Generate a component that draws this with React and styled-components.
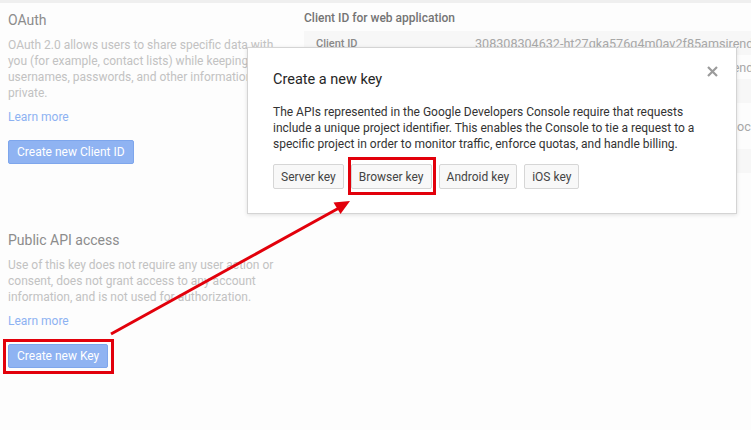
import React from "react";
import styled, { createGlobalStyle } from "styled-components";

const Global = createGlobalStyle`
  html, body {
    margin: 0;
    padding: 0;
    background: #fdfdfd;
  }
  body {
    font-family: Roboto, "Liberation Sans", Arial, sans-serif;
    font-size: 12px;
  }
`;

const Page = styled.div`
  position: relative;
  width: 751px;
  height: 430px;
  overflow: hidden;
  background: #fdfdfd;
`;

const TopStrip = styled.div`
  height: 3px;
  background: #efefef;
`;

const Columns = styled.div`
  display: grid;
  grid-template-columns: 280px 1fr;
  column-gap: 16px;
  padding-left: 8px;
`;

const Left = styled.div`
  display: flex;
  flex-direction: column;
`;

const Section = styled.section`
  display: flex;
  flex-direction: column;
  align-items: flex-start;
  margin-top: ${(p) => p.$top || 0}px;
`;

const Heading = styled.h2`
  margin: 0;
  font-size: 14px;
  line-height: 20px;
  font-weight: 400;
  color: #8c8c8c;
`;

const Desc = styled.p`
  margin: 7px 0 0;
  font-size: 12px;
  line-height: 16px;
  color: #c2c2c2;
`;

const LearnMore = styled.a`
  margin-top: 8px;
  font-size: 12px;
  line-height: 16px;
  color: #8db2f2;
  text-decoration: none;
`;

const BlueButton = styled.button`
  margin-top: 15px;
  height: 24px;
  padding: 0 8px;
  border: 1px solid #7ea6ec;
  border-radius: 2px;
  background: #8fb3f2;
  color: #fff;
  font-family: inherit;
  font-size: 12px;
`;

const Right = styled.div`
  display: flex;
  flex-direction: column;
  min-width: 0;
`;

const SubTitle = styled.div`
  margin-top: 7px;
  font-size: 12px;
  line-height: 16px;
  font-weight: 500;
  color: #747474;
`;

const Table = styled.div`
  margin-top: 5px;
  display: flex;
  flex-direction: column;
`;

const Row = styled.div`
  display: grid;
  grid-template-columns: 159px 1fr;
  height: ${(p) => p.$h || 24}px;
  align-items: center;
  padding-left: 12px;
  background: ${(p) => (p.$alt ? "#f7f7f7" : "transparent")};
  white-space: nowrap;
`;

const Label = styled.span`
  font-size: 11px;
  font-weight: 500;
  color: #8a8a8a;
`;

const Value = styled.span`
  font-size: 12.6px;
  color: #a8a8a8;
  white-space: nowrap;
`;

const NoKeys = styled.div`
  margin-top: 22px;
  font-size: 12px;
  line-height: 16px;
  color: #9a9a9a;
`;

const Modal = styled.div`
  position: absolute;
  left: 247px;
  top: 47px;
  width: 490px;
  box-sizing: border-box;
  padding: 22px 25px 24px;
  background: #fff;
  border: 1px solid #d4d4d4;
  box-shadow: 0 1px 4px rgba(0, 0, 0, 0.12);
`;

const ModalTitle = styled.h3`
  margin: 0;
  font-size: 14.5px;
  line-height: 20px;
  font-weight: 400;
  color: #262626;
`;

const Close = styled.button`
  position: absolute;
  top: 16px;
  right: 17px;
  width: 14px;
  height: 14px;
  padding: 0;
  border: 0;
  background: none;
  display: flex;
  align-items: center;
  justify-content: center;
`;

const ModalText = styled.p`
  margin: 14px 0 0;
  font-size: 12px;
  line-height: 16px;
  color: #333;
`;

const KeyRow = styled.div`
  display: flex;
  gap: 7px;
  margin-top: 12px;
`;

const KeyButton = styled.button`
  height: 25px;
  padding: 0 7px;
  border: 1px solid #d6d6d6;
  border-radius: 2px;
  background: #f8f8f8;
  color: #444;
  font-family: inherit;
  font-size: 12px;
`;

const Highlight = styled.div`
  position: absolute;
  left: ${(p) => p.$x}px;
  top: ${(p) => p.$y}px;
  width: ${(p) => p.$w}px;
  height: ${(p) => p.$h}px;
  box-sizing: border-box;
  border: 3px solid #e2000b;
  pointer-events: none;
`;

const ArrowLayer = styled.svg`
  position: absolute;
  left: 0;
  top: 0;
  pointer-events: none;
`;

const Arrow = () => (
  <ArrowLayer width="751" height="430" viewBox="0 0 751 430">
    <line x1="111" y1="334" x2="339" y2="208" stroke="#e2000b" strokeWidth="3" />
    <polygon points="350,201 340.5,214 333.5,202.5" fill="#e2000b" />
  </ArrowLayer>
);

export default function App() {
  return (
    <Page>
      <Global />
      <TopStrip />
      <Columns>
        <Left>
          <Section $top={7}>
            <Heading>OAuth</Heading>
            <Desc>
              OAuth 2.0 allows users to share specific data with you (for
              example, contact lists) while keeping their usernames,
              passwords, and other information private.
            </Desc>
            <LearnMore href="#">Learn more</LearnMore>
            <BlueButton>Create new Client ID</BlueButton>
          </Section>
          <Section $top={66}>
            <Heading>Public API access</Heading>
            <Desc>
              Use of this key does not require any user action or consent,
              does not grant access to any account information, and is not
              used for authorization.
            </Desc>
            <LearnMore href="#">Learn more</LearnMore>
            <BlueButton>Create new Key</BlueButton>
          </Section>
        </Left>
        <Right>
          <SubTitle>Client ID for web application</SubTitle>
          <Table>
            <Row $alt>
              <Label>Client ID</Label>
              <Value>308308304632-ht27qka576q4m0av2f85amsirends.apps.googleusercontent.com</Value>
            </Row>
            <Row>
              <Label>Email address</Label>
              <Value>308308304632-ht27qka576q4m0av2f85amsirends@developer.gserviceaccount.com</Value>
            </Row>
            <Row $alt>
              <Label>Client secret</Label>
              <Value>Hq2xV7lLd0pS</Value>
            </Row>
            <Row $h={46}>
              <Label>Redirect URIs</Label>
              <Value>https://www.example.com/index.php?option=social_login</Value>
            </Row>
            <Row $alt>
              <Label>JavaScript origins</Label>
              <Value>https://www.example.com</Value>
            </Row>
          </Table>
          <NoKeys>No keys found.</NoKeys>
        </Right>
      </Columns>

      <Modal>
        <ModalTitle>Create a new key</ModalTitle>
        <Close aria-label="Close">
          <svg width="11" height="11" viewBox="0 0 11 11">
            <path d="M1 1L10 10M10 1L1 10" stroke="#9b9b9b" strokeWidth="2.2" />
          </svg>
        </Close>
        <ModalText>
          The APIs represented in the Google Developers Console require that
          requests include a unique project identifier. This enables the
          Console to tie a request to a specific project in order to monitor
          traffic, enforce quotas, and handle billing.
        </ModalText>
        <KeyRow>
          <KeyButton>Server key</KeyButton>
          <KeyButton>Browser key</KeyButton>
          <KeyButton>Android key</KeyButton>
          <KeyButton>iOS key</KeyButton>
        </KeyRow>
      </Modal>

      <Highlight $x={348} $y={157} $w={88} $h={38} />
      <Highlight $x={3} $y={339} $w={111} $h={35} />
      <Arrow />
    </Page>
  );
}
